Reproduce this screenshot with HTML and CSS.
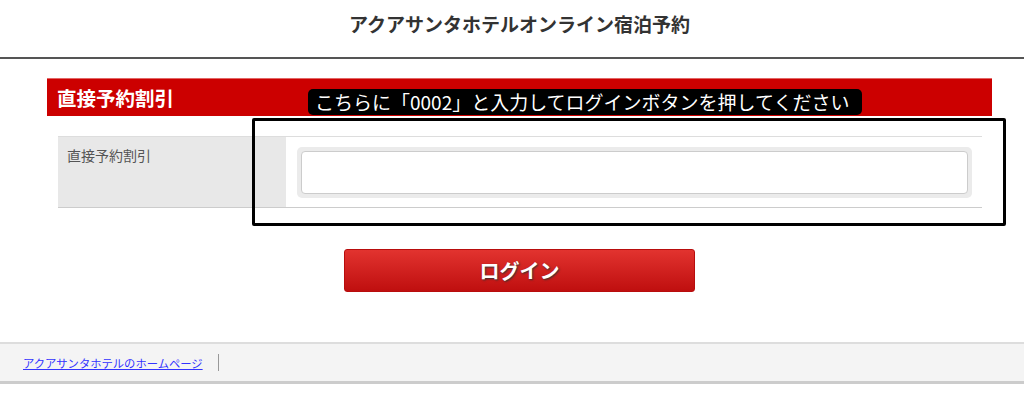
FILE: index.html
```html
<!DOCTYPE html>
<html lang="ja">
<head>
    <meta charset="UTF-8">
    <meta name="viewport" content="width=device-width, initial-scale=1.0">
    <title>アクアサンタホテルオンライン宿泊予約</title>
    <link rel="stylesheet" href="styles.css">
</head>
<body>
    <header class="site-header">
        <h1>アクアサンタホテルオンライン宿泊予約</h1>
    </header>

    <div class="content">
        <h2 class="section-title">直接予約割引</h2>

        <div class="form-row">
            <div class="form-label">直接予約割引</div>
            <div class="form-field">
                <div class="input-wrap">
                    <input type="text" id="code" name="code">
                </div>
            </div>
        </div>

        <div class="button-container">
            <button class="login-button">ログイン</button>
        </div>

        <div class="hint">こちらに「0002」と入力してログインボタンを押してください</div>
        <div class="hint-frame"></div>
    </div>

    <footer class="site-footer">
        <a href="#">アクアサンタホテルのホームページ</a>
        <span class="sep"></span>
    </footer>
</body>
</html>
```

FILE: styles.css
```css
body {
    margin: 0;
    padding: 0;
    background-color: #fff;
    font-family: "Noto Sans CJK JP", "Noto Sans", sans-serif;
    color: #333;
}
.site-header {
    height: 57px;
    border-bottom: 2px solid #555;
    text-align: center;
}
.site-header h1 {
    margin: 0;
    padding-top: 10px;
    padding-left: 15px;
    font-size: 19px;
    line-height: 28px;
    font-weight: bold;
    color: #333;
}
.content {
    position: relative;
    margin: 19px 32px 0 47px;
}
.section-title {
    margin: 0;
    height: 38px;
    line-height: 38px;
    padding-left: 10px;
    background-color: #cc0000;
    border-top: 1px solid #e26666;
    box-sizing: border-box;
    color: #fff;
    font-size: 19.5px;
    font-weight: bold;
}
.form-row {
    display: flex;
    margin: 20px 10px 0 11px;
    border-top: 1px solid #ddd;
    border-bottom: 1px solid #ccc;
}
.form-label {
    width: 228px;
    flex-shrink: 0;
    background-color: #e8e8e8;
    padding: 8px 9px;
    box-sizing: border-box;
    font-size: 14px;
    color: #555;
}
.form-field {
    flex: 1;
    padding: 10px 10px 9px 11px;
}
.input-wrap {
    background-color: #ebebeb;
    border-radius: 5px;
    padding: 4px;
}
.input-wrap input {
    display: block;
    width: 100%;
    height: 43px;
    box-sizing: border-box;
    border: 1px solid #ccc;
    border-radius: 4px;
    background-color: #fff;
}
.button-container {
    text-align: center;
    margin-top: 41px;
}
.login-button {
    width: 351px;
    height: 43px;
    border: 1px solid #b80d0d;
    border-radius: 3px;
    background: linear-gradient(#e2332f, #bf0f0f);
    color: #fff;
    font-family: "Noto Sans CJK JP", sans-serif;
    font-size: 20px;
    font-weight: bold;
    text-shadow: 1px 1px 2px #333;
    cursor: pointer;
}
.hint {
    position: absolute;
    left: 261px;
    top: 11px;
    width: 554px;
    height: 26px;
    line-height: 25px;
    box-sizing: border-box;
    padding-left: 7px;
    background-color: #000;
    border-radius: 5px;
    color: #fff;
    font-size: 19px;
    white-space: nowrap;
    overflow: hidden;
}
.hint-frame {
    position: absolute;
    left: 205px;
    top: 40px;
    width: 754px;
    height: 108px;
    box-sizing: border-box;
    border: 3px solid #000;
    border-radius: 2px;
}
.site-footer {
    margin-top: 50px;
    height: 37px;
    background-color: #f4f4f4;
    border-top: 2px solid #ddd;
    border-bottom: 3px solid #ccc;
    display: flex;
    align-items: center;
    padding-left: 23px;
}
.site-footer a {
    color: #3333ff;
    font-size: 11.3px;
}
.sep {
    display: inline-block;
    width: 1px;
    height: 17px;
    background-color: #999;
    margin-left: 15px;
}
```
